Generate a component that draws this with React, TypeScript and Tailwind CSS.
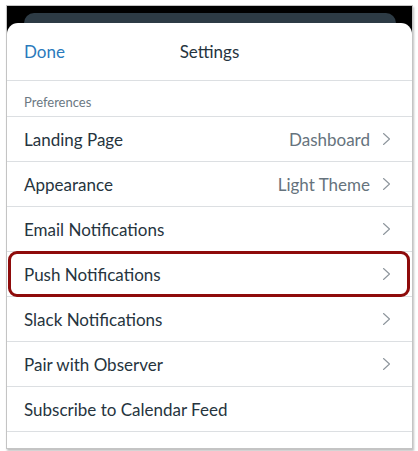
import { ReactNode } from "react";

type Row = { label: string; value?: string; chevron?: boolean; highlight?: boolean };

const rows: Row[] = [
  { label: "Landing Page", value: "Dashboard", chevron: true },
  { label: "Appearance", value: "Light Theme", chevron: true },
  { label: "Email Notifications", chevron: true },
  { label: "Push Notifications", chevron: true, highlight: true },
  { label: "Slack Notifications", chevron: true },
  { label: "Pair with Observer", chevron: true },
  { label: "Subscribe to Calendar Feed" },
];

function Chevron() {
  return (
    <svg width="9" height="14" viewBox="0 0 9 14" fill="none" className="shrink-0">
      <path d="M1.5 1.5 L7.5 7 L1.5 12.5" stroke="#8d959c" strokeWidth="1.1" strokeLinecap="round" strokeLinejoin="round" />
    </svg>
  );
}

function SettingsRow({ row }: { row: Row }): ReactNode {
  return (
    <div className="relative h-[45px] border-b border-[#dcdfe2] flex items-center pl-[17px] pr-[21px]">
      <span className="flex-1 text-[17px] text-[#26343e] pt-[1px]">{row.label}</span>
      {row.value && <span className="text-[17px] text-[#66737d] mr-[12px] pt-[1px]">{row.value}</span>}
      {row.chevron && <Chevron />}
      {row.highlight && (
        <div className="absolute left-[1px] right-[2px] top-[-1px] bottom-[-1px] border-[3px] border-[#8e0b0b] rounded-[9px]" />
      )}
    </div>
  );
}

export default function App() {
  return (
    <div className="w-[418px] h-[451px] bg-white pt-[5px] pl-[6px] font-['Lato',sans-serif]">
      <div className="w-[407px] h-[444px] border border-[#c4c4c4] shadow-[1px_2px_2px_rgba(0,0,0,0.25)] bg-black flex flex-col overflow-hidden">
        <div className="mt-[7px] ml-[17px] mr-[16px] h-[10px] rounded-t-[12px] bg-[#2d3b45] shrink-0" />
        <div className="flex-1 bg-white rounded-t-[11px] flex flex-col">
          <div className="relative h-[58px] border-b border-[#dcdfe2] flex items-center justify-center shrink-0">
            <span className="absolute left-[17px] text-[17px] text-[#2b7abc]">Done</span>
            <span className="text-[17px] text-[#26343e]">Settings</span>
          </div>
          <div className="h-[36px] border-b border-[#dcdfe2] flex items-end pb-[4px] pl-[17px] shrink-0">
            <span className="text-[13px] text-[#6b7883]">Preferences</span>
          </div>
          {rows.map((r) => (
            <SettingsRow key={r.label} row={r} />
          ))}
        </div>
      </div>
    </div>
  );
}
